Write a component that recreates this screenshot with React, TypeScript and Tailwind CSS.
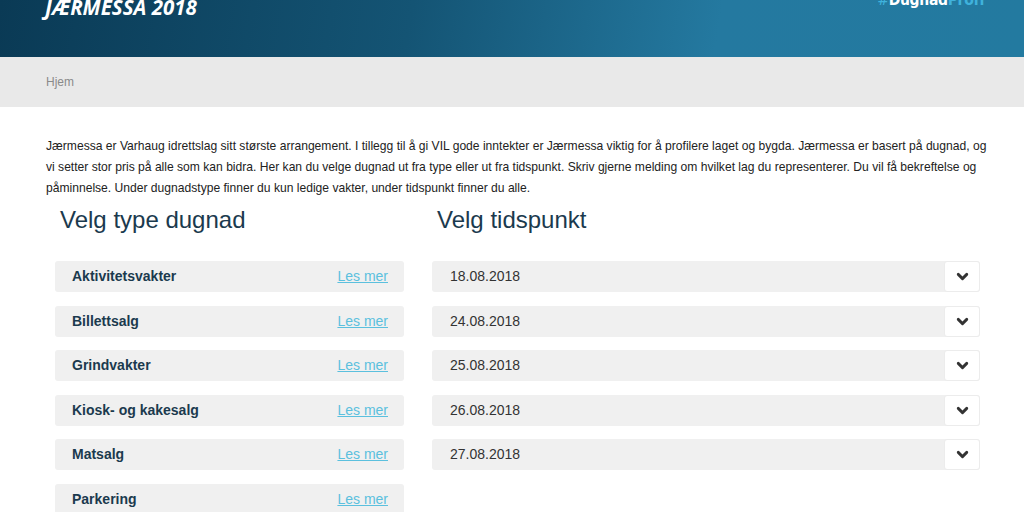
import { ChevronDown } from 'lucide-react'

const types = ['Aktivitetsvakter', 'Billettsalg', 'Grindvakter', 'Kiosk- og kakesalg', 'Matsalg', 'Parkering']
const dates = ['18.08.2018', '24.08.2018', '25.08.2018', '26.08.2018', '27.08.2018']

export default function App() {
  return (
    <div className="min-h-screen bg-white font-['Liberation_Sans',Arial,sans-serif] overflow-hidden">
      {/* Header, page is scrolled so the top is cut */}
      <div className="h-[57px] bg-[linear-gradient(100deg,#0a3a55_0%,#145474_40%,#2479a0_70%,#237aa0_100%)] flex justify-between pl-[45px] pr-[39px] overflow-hidden">
        <h1 className="mt-[-8px] font-['Open_Sans',sans-serif] italic font-bold text-[20.5px] leading-[30px] text-white">
          JÆRMESSA 2018
        </h1>
        <div className="mt-[-10px] font-['DejaVu_Sans_Condensed','DejaVu_Sans',sans-serif] font-bold text-[15.5px] leading-[20px] tracking-[-0.3px]">
          <span className="text-[#3fb2dc] font-normal">#</span>
          <span className="text-white">Dugnad</span>
          <span className="text-[#3fb2dc]">Proff</span>
        </div>
      </div>

      {/* Breadcrumb */}
      <div className="h-[50px] bg-[#e9e9e9] flex items-center px-[46px]">
        <span className="text-[12px] text-[#8a8a8a]">Hjem</span>
      </div>

      <div className="px-[46px] pt-[29px]">
        <p className="text-[12.1px] leading-[21px] text-[#222] mr-[-12px]">
          Jærmessa er Varhaug idrettslag sitt største arrangement. I tillegg til å gi VIL gode inntekter er Jærmessa viktig for å profilere laget og bygda. Jærmessa er basert på dugnad, og vi setter stor pris på alle som kan bidra. Her kan du velge dugnad ut fra type eller ut fra tidspunkt. Skriv gjerne melding om hvilket lag du representerer. Du vil få bekreftelse og påminnelse. Under dugnadstype finner du kun ledige vakter, under tidspunkt finner du alle.
        </p>

        <div className="flex gap-[28px] pl-[9px] mt-[7px]">
          <div className="w-[349px] shrink-0">
            <h2 className="text-[24px] leading-[28px] text-[#1b3a4e] pl-[5px] mb-[27px]">Velg type dugnad</h2>
            <div className="flex flex-col gap-[13.6px]">
              {types.map(t => (
                <div key={t} className="h-[31px] bg-[#f0f0f0] rounded-[3px] flex items-center justify-between pl-[17px] pr-[16px]">
                  <span className="text-[14px] font-bold text-[#1b3a4e]">{t}</span>
                  <a className="text-[14px] text-[#5bc0de] underline">Les mer</a>
                </div>
              ))}
            </div>
          </div>

          <div className="w-[548px] shrink-0">
            <h2 className="text-[24px] leading-[28px] text-[#1b3a4e] pl-[5px] mb-[27px]">Velg tidspunkt</h2>
            <div className="flex flex-col gap-[13.6px]">
              {dates.map(d => (
                <div key={d} className="h-[31px] bg-[#f0f0f0] rounded-[3px] flex items-center justify-between pl-[18px]">
                  <span className="text-[14px] text-[#333]">{d}</span>
                  <div className="h-full w-[36px] bg-white border border-[#ececec] rounded-[3px] flex items-center justify-center">
                    <ChevronDown size={17} strokeWidth={4} className="text-[#333]" />
                  </div>
                </div>
              ))}
            </div>
          </div>
        </div>
      </div>
    </div>
  )
}
